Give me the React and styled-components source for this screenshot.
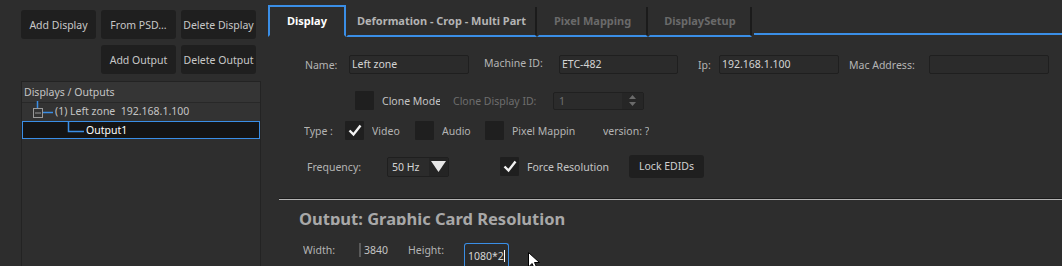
import React from "react";
import styled, { createGlobalStyle } from "styled-components";

const Global = createGlobalStyle`
  html, body {
    margin: 0;
    padding: 0;
    background: #2d2d2d;
    overflow: hidden;
  }
  body {
    font-family: "Noto Sans", "Open Sans", sans-serif;
    font-size: 10.5px;
    color: #b4b4b4;
  }
`;

const Page = styled.div`
  display: flex;
  width: 1062px;
  height: 266px;
  overflow: hidden;
  position: relative;
`;

const Side = styled.div`
  width: 262px;
  flex: none;
  padding: 10px 0 0 21px;
  box-sizing: border-box;
  display: flex;
  flex-direction: column;
`;

const ButtonGrid = styled.div`
  display: grid;
  grid-template-columns: repeat(3, 75px);
  grid-auto-rows: 29px;
  column-gap: 5px;
  row-gap: 6px;
`;

const SideButton = styled.button`
  grid-column: ${(p) => p.$col || "auto"};
  background: #1f1f1f;
  border: none;
  border-radius: 3px;
  color: #c8c8c8;
  font-family: inherit;
  font-size: 10.5px;
  padding: 0;
  white-space: nowrap;
`;

const Tree = styled.div`
  margin-top: 7px;
  width: 240px;
  flex: 1;
  border: 1px solid #232323;
  border-bottom: none;
  background: #2e2e2e;
  box-sizing: border-box;
`;

const TreeHeader = styled.div`
  height: 20px;
  line-height: 21px;
  padding-left: 2px;
  background: #353535;
  border-bottom: 1px solid #282828;
  color: #c4c4c4;
`;

const TreeRow = styled.div`
  position: relative;
  height: ${(p) => (p.$selected ? "16px" : "18px")};
  line-height: 17px;
  padding-left: ${(p) => p.$indent}px;
  background: ${(p) => (p.$selected ? "#141414" : "#333333")};
  border: ${(p) => (p.$selected ? "1px solid #3a8ee6" : "none")};
  color: ${(p) => (p.$selected ? "#ffffff" : "#c4c4c4")};
  white-space: nowrap;
`;

const Branch = styled.svg`
  position: absolute;
  left: 0;
  top: 0;
  overflow: visible;
`;

const Main = styled.div`
  flex: 1;
  display: flex;
  flex-direction: column;
  padding-left: 3px;
`;

const TabBar = styled.div`
  height: 35px;
  padding: 5px 0 0 3px;
  box-sizing: border-box;
  display: flex;
`;

const Tab = styled.div`
  height: 28px;
  line-height: 28px;
  font-weight: 700;
  font-size: 11px;
  white-space: nowrap;
  padding: 0 ${(p) => p.$pad}px;
  color: ${(p) => (p.$active ? "#ffffff" : p.$dim ? "#6a6a6a" : "#b4b4b4")};
  border: 2px solid ${(p) => (p.$active ? "#3a8ee6" : "transparent")};
  border-bottom: 2px solid ${(p) => (p.$active ? "transparent" : "#3a8ee6")};
  position: relative;
  &::after {
    content: "";
    display: ${(p) => (p.$sep ? "block" : "none")};
    position: absolute;
    right: -2px;
    top: 0;
    bottom: 0;
    width: 2px;
    background: #1b1b1b;
  }
`;

const TabFill = styled.div`
  flex: 1;
  border-bottom: 2px solid #3a8ee6;
  height: 28px;
  margin-left: ${(p) => p.$ml || 0}px;
`;

const Form = styled.div`
  padding: 20px 0 0 0;
  display: flex;
  flex-direction: column;
`;

const Row = styled.div`
  display: flex;
  align-items: center;
  height: ${(p) => p.$h}px;
  margin-top: ${(p) => p.$mt || 0}px;
  padding-left: ${(p) => p.$pl}px;
`;

const Label = styled.span`
  width: ${(p) => (p.$w ? `${p.$w}px` : "auto")};
  flex: none;
  margin-left: ${(p) => p.$ml || 0}px;
  color: ${(p) => (p.$dim ? "#6e6e6e" : p.$light ? "#c4c4c4" : "#b4b4b4")};
  white-space: nowrap;
  overflow: hidden;
  position: relative;
  top: ${(p) => p.$dy || 0}px;
`;

const Input = styled.div`
  width: ${(p) => p.$w}px;
  height: 19px;
  box-sizing: border-box;
  margin-left: ${(p) => p.$ml || 0}px;
  border: 1px solid #1f1f1f;
  border-radius: 2px;
  background: #2b2b2b;
  color: #d4d4d4;
  padding-left: 2px;
  line-height: 17px;
  flex: none;
`;

const Check = styled.div`
  width: 19px;
  height: 19px;
  background: #1f1f1f;
  border-radius: 1px;
  margin-left: ${(p) => p.$ml || 0}px;
  margin-right: 8px;
  flex: none;
  display: flex;
  align-items: center;
  justify-content: center;
`;

const Spin = styled.div`
  width: 91px;
  height: 18px;
  box-sizing: border-box;
  border: 1px solid #202020;
  border-radius: 2px;
  background: #2b2b2b;
  color: #707070;
  display: flex;
  line-height: 16px;
  flex: none;
`;

const SpinText = styled.span`
  flex: 1;
  padding-left: 5px;
`;

const SpinArrows = styled.div`
  width: 21px;
  background: #262626;
  display: flex;
  align-items: center;
  justify-content: center;
`;

const Combo = styled.div`
  width: 62px;
  height: 20px;
  box-sizing: border-box;
  border: 1px solid #1f1f1f;
  border-radius: 2px;
  background: #2b2b2b;
  color: #d4d4d4;
  display: flex;
  line-height: 18px;
  flex: none;
`;

const ComboText = styled.span`
  flex: 1;
  padding-left: 4px;
`;

const ComboArrow = styled.div`
  width: 19px;
  background: #242424;
  display: flex;
  align-items: center;
  justify-content: center;
`;

const Button = styled.div`
  margin-left: ${(p) => p.$ml || 0}px;
  width: 75px;
  height: 23px;
  line-height: 23px;
  border-radius: 3px;
  background: #1f1f1f;
  color: #d0d0d0;
  text-align: center;
  flex: none;
`;

const Divider = styled.div`
  margin: 20px 0 0 14px;
  height: 1px;
  border-top: 1px solid #1a1a1a;
  background: #b4b4b4;
`;

const Heading = styled.div`
  margin: 6px 0 0 34px;
  height: 19px;
  overflow: hidden;
  font-size: 16.5px;
  font-weight: 700;
  color: #a8a8a8;
  line-height: 25px;
`;

const Bar = styled.span`
  width: 2px;
  height: 14px;
  background: #5a5a5a;
  margin-right: 3px;
  flex: none;
`;

const FocusInput = styled.div`
  width: 45px;
  height: 26px;
  box-sizing: border-box;
  border: 1px solid #3a8ee6;
  border-bottom: none;
  border-radius: 3px 3px 0 0;
  background: #2b2b2b;
  color: #d4d4d4;
  padding: 5px 0 0 3px;
  align-self: flex-start;
  flex: none;
`;

const Caret = styled.span`
  display: inline-block;
  width: 1px;
  height: 12px;
  background: #ffffff;
  vertical-align: -2px;
`;

const Cursor = styled.svg`
  position: absolute;
  left: 528px;
  top: 252px;
`;

function CheckMark() {
  return (
    <svg width="14" height="13" viewBox="0 0 14 13">
      <polyline points="1.5,6.5 5.5,10.5 12.5,1.5" fill="none" stroke="#f2f2f2" strokeWidth="2.4" />
    </svg>
  );
}

export default function App() {
  return (
    <>
      <Global />
      <Page>
        <Side>
          <ButtonGrid>
            <SideButton>Add Display</SideButton>
            <SideButton>From PSD...</SideButton>
            <SideButton>Delete Display</SideButton>
            <SideButton $col="2">Add Output</SideButton>
            <SideButton>Delete Output</SideButton>
          </ButtonGrid>
          <Tree>
            <TreeHeader>Displays / Outputs</TreeHeader>
            <TreeRow $indent={33}>
              <Branch width="40" height="18">
                <line x1="15.5" y1="-2" x2="15.5" y2="5" stroke="#3a8ee6" strokeWidth="1.5" />
                <rect x="11.5" y="5.5" width="9" height="9" fill="none" stroke="#9a9a9a" />
                <line x1="13" y1="10" x2="19" y2="10" stroke="#9a9a9a" />
                <line x1="21" y1="9.5" x2="31" y2="9.5" stroke="#3a8ee6" strokeWidth="1.5" />
              </Branch>
              (1) Left zone&nbsp;&nbsp;192.168.1.100
            </TreeRow>
            <TreeRow $selected $indent={63}>
              <Branch width="70" height="18">
                <polyline points="45.5,-1 45.5,9.5 61,9.5" fill="none" stroke="#3a8ee6" strokeWidth="1.5" />
              </Branch>
              Output1
            </TreeRow>
          </Tree>
        </Side>
        <Main>
          <TabBar>
            <Tab $active $pad={17}>Display</Tab>
            <Tab $pad={9} $sep>Deformation - Crop - Multi Part</Tab>
            <Tab $pad={15} $dim $sep>Pixel Mapping</Tab>
            <Tab $pad={14} $dim $sep>DisplaySetup</Tab>
            <TabFill $ml={2} />
          </TabBar>
          <Form>
            <Row $h={19} $pl={40}>
              <Label $w={44}>Name:</Label>
              <Input $w={120}>Left zone</Input>
              <Label $w={75} $ml={15} $dy={-2}>Machine ID:</Label>
              <Input $w={119}>ETC-482</Input>
              <Label $w={21} $ml={20}>Ip:</Label>
              <Input $w={120}>192.168.1.100</Input>
              <Label $w={80} $ml={10}>Mac Address:</Label>
              <Input $w={120} />
            </Row>
            <Row $h={19} $mt={17} $pl={90}>
              <Check />
              <Label $light $w={58}>Clone Mode</Label>
              <Label $dim $w={100} $ml={13}>Clone Display ID:</Label>
              <Spin>
                <SpinText>1</SpinText>
                <SpinArrows>
                  <svg width="7" height="11" viewBox="0 0 7 11">
                    <polygon points="3.5,0 7,4 0,4" fill="#6a6a6a" />
                    <polygon points="0,7 7,7 3.5,11" fill="#6a6a6a" />
                  </svg>
                </SpinArrows>
              </Spin>
            </Row>
            <Row $h={19} $mt={11} $pl={39}>
              <Label $w={41}>Type :</Label>
              <Check>
                <CheckMark />
              </Check>
              <Label $w={43}>Video</Label>
              <Check />
              <Label $w={43}>Audio</Label>
              <Check />
              <Label $w={63}>Pixel Mapping</Label>
              <Label $ml={28}>version: ?</Label>
            </Row>
            <Row $h={23} $mt={15} $pl={42}>
              <Label $w={80}>Frequency:</Label>
              <Combo>
                <ComboText>50 Hz</ComboText>
                <ComboArrow>
                  <svg width="15" height="11" viewBox="0 0 15 11">
                    <polygon points="0,0 15,0 7.5,11" fill="#e6e6e6" />
                  </svg>
                </ComboArrow>
              </Combo>
              <Check $ml={51}>
                <CheckMark />
              </Check>
              <Label $light $w={102}>Force Resolution</Label>
              <Button>Lock EDIDs</Button>
            </Row>
            <Divider />
            <Heading>Output: Graphic Card Resolution</Heading>
            <Row $h={14} $mt={18} $pl={38}>
              <Label $w={56}>Width:</Label>
              <Bar />
              <Label $w={44} $light>3840</Label>
              <Label $w={56}>Height:</Label>
              <FocusInput>
                1080*2<Caret />
              </FocusInput>
            </Row>
          </Form>
        </Main>
        <Cursor width="14" height="16" viewBox="0 0 14 16">
          <polygon points="0.5,0.5 0.5,15 4,11.5 7,18 9.5,17 6.5,10.5 11.5,10.5" fill="#ffffff" stroke="#000000" strokeWidth="1" />
        </Cursor>
      </Page>
    </>
  );
}
